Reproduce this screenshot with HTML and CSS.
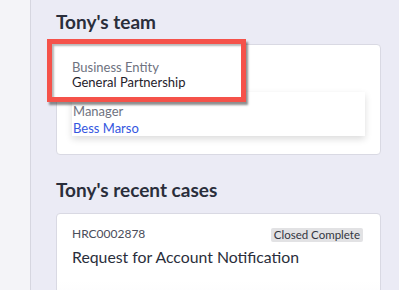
FILE: index.html
```html
<!DOCTYPE html>
<html lang="en">

<head>
    <meta charset="UTF-8">
    <meta name="viewport" content="width=device-width, initial-scale=1.0">
    <title>Tony's team</title>
    <link rel="stylesheet" href="styles.css">
</head>

<body>
    <div class="page">
        <aside class="sidebar"></aside>
        <main class="main">
            <h2 class="section-title">Tony's team</h2>
            <div class="card team-card">
                <div class="highlight">
                    <div class="field-label">Business Entity</div>
                    <div class="field-value">General Partnership</div>
                </div>
                <div class="manager-panel">
                    <div class="field-label manager-label">Manager</div>
                    <a class="field-link" href="#">Bess Marso</a>
                </div>
            </div>

            <h2 class="section-title cases-title">Tony's recent cases</h2>
            <div class="card case-card">
                <div class="case-top">
                    <span class="case-number">HRC0002878</span>
                    <span class="badge">Closed Complete</span>
                </div>
                <div class="case-title">Request for Account Notification</div>
            </div>
        </main>
    </div>
</body>

</html>
```

FILE: styles.css
```css
body {
    margin: 0;
    font-family: Lato, "Liberation Sans", sans-serif;
    background-color: #ebebf5;
    color: #2a2e3b;
    overflow: hidden;
}

.page {
    display: flex;
    height: 290px;
    overflow: hidden;
}

.sidebar {
    width: 30px;
    flex-shrink: 0;
    background-color: #f4f4f8;
    border-right: 1px solid #d6d6e0;
}

.main {
    flex: 1;
    padding: 10px 18px 0 25px;
    overflow: hidden;
}

.section-title {
    margin: 0 0 10px;
    font-size: 19px;
    line-height: 24px;
    font-weight: 700;
    color: #2a2e3b;
}

.cases-title {
    margin-top: 23px;
    margin-bottom: 11px;
}

.card {
    position: relative;
    background: white;
    border: 1px solid #d9d9e3;
    border-radius: 4px;
}

.team-card {
    padding: 47px 15px 18px;
}

.highlight {
    position: absolute;
    left: -10px;
    top: -6px;
    width: 199px;
    height: 63px;
    box-sizing: border-box;
    padding: 16px 20px 0;
    background: white;
    border: 5px solid #f5524a;
    box-shadow: 2px 3px 2px rgba(50, 50, 50, 0.55), inset 2px 2px 2px rgba(50, 50, 50, 0.35);
    z-index: 2;
}

.field-label {
    font-size: 13px;
    line-height: 15px;
    color: #6e7280;
}

.field-value {
    font-size: 13px;
    line-height: 15px;
    color: #1f222b;
}

.manager-panel {
    padding: 10px 1px 0;
    height: 34px;
    background: white;
    box-shadow: 0 3px 7px rgba(0, 0, 0, 0.14);
}

.manager-label {
    line-height: 18px;
}

.field-link {
    display: block;
    font-size: 13px;
    line-height: 16px;
    color: #3456e0;
    text-decoration: none;
}

.case-card {
    padding: 11px 17px 0 15px;
    min-height: 100px;
    background: linear-gradient(to bottom, white 60%, #f7f7f9);
}

.case-top {
    display: flex;
    justify-content: space-between;
    align-items: center;
}

.case-number {
    font-size: 12px;
    line-height: 16px;
    color: #4a4e5a;
}

.badge {
    font-size: 11.5px;
    line-height: 14px;
    padding: 0 3px;
    margin-top: 3px;
    background-color: #e2e2e4;
    color: #33363f;
    border-radius: 2px;
}

.case-title {
    margin-top: 5px;
    font-size: 15.8px;
    line-height: 20px;
    color: #2a2e3b;
}
```
